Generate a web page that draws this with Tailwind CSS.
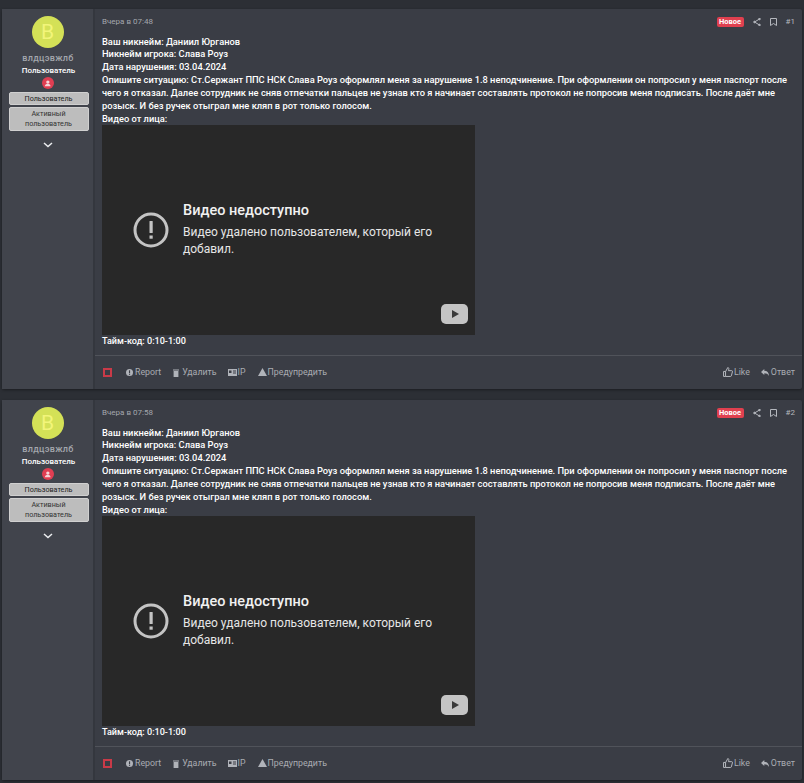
<!DOCTYPE html>
<html lang="ru">
<head>
<meta charset="UTF-8">
<title>Жалоба</title>
<script src="https://cdn.jsdelivr.net/npm/@tailwindcss/browser@4"></script>
</head>
<body class="bg-[#2c2f35] font-['Roboto',sans-serif] overflow-hidden">
<div class="h-[783px] pt-[9px] pl-[2px] pr-[2px] flex flex-col gap-[11px]">

  <!-- Post 1 -->
  <article class="h-[380px] flex bg-[#3a3d45] rounded-[2px] shadow-[0_1px_3px_rgba(0,0,0,0.4)]">
    <div class="w-[93px] shrink-0 bg-[#41444c] border-r-2 border-[#34373e] flex flex-col items-center pt-[7px]">
      <div class="w-8 h-8 rounded-full bg-[#d4e157] text-[#f2f57a] text-[21px] leading-8 text-center">B</div>
      <div class="mt-[4px] ml-px text-[9px] leading-3 font-medium tracking-[0.3px] text-[#a4a7ad]">влдцэвжлб</div>
      <div class="mt-[1px] ml-[2px] text-[8px] leading-3 font-medium text-white">Пользователь</div>
      <div class="mt-0 w-3 h-3 rounded-full bg-[#e03e52] flex items-center justify-center">
        <svg width="7" height="7" viewBox="0 0 10 10" fill="#f6d5d9"><circle cx="5.500" cy="3" r="2.400"/><path d="M1 9c.5-2.500 2.500-3.600 4.500-3.600S9 6.500 9.500 9z"/></svg>
      </div>
      <div class="mt-[3px] ml-[2px] w-20 h-[13px] rounded-[2px] bg-[#bdbdbd] border border-[#d0d0d0] text-[7.2px] leading-[11px] text-center text-[#222]">Пользователь</div>
      <div class="mt-[2px] ml-[2px] w-20 h-6 rounded-[2px] bg-[#bdbdbd] border border-[#d0d0d0] text-[7.2px] leading-[10px] pt-px text-center text-[#333]">Активный<br>пользователь</div>
      <svg class="mt-[11px]" width="10" height="6" viewBox="0 0 10 6" fill="none" stroke="#eceef0" stroke-width="1.500"><path d="M1 1l4 3.500L9 1"/></svg>
    </div>
    <div class="flex-1 flex flex-col min-w-0">
      <header class="h-[26px] flex items-center pl-[7px] pr-[7px] pt-[1px] text-[8px] text-[#a4a7ad]">
        <span>Вчера в 07:48</span>
        <span class="ml-auto w-[27px] h-[10px] rounded-[2px] bg-[#e0404f] text-white font-bold text-[7.5px] leading-[10px] text-center">Новое</span>
        <svg class="ml-[9px]" width="8" height="8" viewBox="0 0 8 8" fill="none" stroke="#b5b8be" stroke-width="1"><path d="M6.500 1L1.500 4l5 3"/><circle cx="6.500" cy="1" r=".8" fill="#b5b8be"/><circle cx="1.500" cy="4" r=".8" fill="#b5b8be"/><circle cx="6.500" cy="7" r=".8" fill="#b5b8be"/></svg>
        <svg class="ml-[9px]" width="7" height="8" viewBox="0 0 7 8" fill="none" stroke="#b5b8be" stroke-width="1"><path d="M.5.500h6v7L3.500 5.500l-3 2z"/></svg>
        <span class="ml-[9px] text-[#b5b8be]">#1</span>
      </header>
      <div class="pl-[7px] text-[9.3px] leading-[13px] font-medium text-white">
        <p class="pt-px -mb-px">Ваш никнейм: Даниил Юрганов</p>
        <p>Никнейм игрока: Слава Роуз</p>
        <p>Дата нарушения: 03.04.2024</p>
        <p class="pr-[8px]">Опишите ситуацию: Ст.Сержант ППС НСК Слава Роуз оформлял меня за нарушение 1.8 неподчинение. При оформлении он попросил у меня паспорт после чего я отказал. Далее сотрудник не сняв отпечатки пальцев не узнав кто я начинает составлять протокол не попросив меня подписать. После даёт мне розыск. И без ручек отыграл мне кляп в рот только голосом.</p>
        <p>Видео от лица:</p>
        <div class="relative w-[373px] h-[210px] bg-[#282828] flex items-start pl-[31px] pt-[77px] font-normal">
          <svg class="shrink-0 mt-[10px]" width="36" height="36" viewBox="0 0 36 36" fill="none"><circle cx="18" cy="18" r="16" stroke="#c4c4c4" stroke-width="3"/><rect x="16.500" y="9" width="3.200" height="12" rx=".5" fill="#c4c4c4"/><rect x="16.500" y="23.500" width="3.200" height="3.200" fill="#c4c4c4"/></svg>
          <div class="ml-[14px] w-[265px]">
            <div class="text-[14.5px] leading-[18px] font-medium text-[#f1f1f1]">Видео недоступно</div>
            <div class="mt-[4px] text-[12px] leading-[17px] text-[#e6e6e6]">Видео удалено пользователем, который его добавил.</div>
          </div>
          <div class="absolute right-[7px] bottom-[11px] w-[27px] h-5 rounded-[5px] bg-[#c4c4c4] flex items-center justify-center">
            <svg width="8" height="8" viewBox="0 0 8 8" fill="#3a3a3a"><path d="M1 0l7 4-7 4z"/></svg>
          </div>
        </div>
        <p class="text-[9.1px]">Тайм-код: 0:10-1:00</p>
      </div>
      <footer class="mt-[7px] h-[35px] border-t border-[#50535a] flex items-center pl-[8px] pr-[7px] text-[8.8px] text-[#a9acb2]">
        <span class="w-[9px] h-[9px] border-2 border-[#c93a48]"></span>
        <svg class="ml-[14px]" width="7" height="7" viewBox="0 0 8 8"><circle cx="4" cy="4" r="4" fill="#b0b3b9"/><rect x="3.400" y="1.500" width="1.300" height="3.200" fill="#3a3d45"/><rect x="3.400" y="5.400" width="1.300" height="1.300" fill="#3a3d45"/></svg>
        <span class="ml-[2px]">Report</span>
        <svg class="ml-[12px]" width="6" height="8" viewBox="0 0 6 8" fill="#b0b3b9"><rect y=".5" width="6" height="1"/><rect x=".6" y="2" width="4.800" height="6"/></svg>
        <span class="ml-[3px]">Удалить</span>
        <svg class="ml-[11px]" width="9" height="7" viewBox="0 0 9 7"><rect width="9" height="7" fill="#b0b3b9"/><rect x="1" y="1.500" width="2.500" height="2.500" fill="#3a3d45"/><rect x="5" y="1.500" width="3" height="1" fill="#3a3d45"/><rect x="5" y="3.500" width="3" height="1" fill="#3a3d45"/></svg>
        <span class="ml-px">IP</span>
        <svg class="ml-[12px] mb-px" width="9" height="8" viewBox="0 0 9 8"><path d="M4.500 0L9 8H0z" fill="#b0b3b9"/></svg>
        <span class="ml-px">Предупредить</span>
        <svg class="ml-auto mb-px" width="10" height="10" viewBox="0 0 9 9" fill="none" stroke="#b5b8be" stroke-width=".9"><path d="M.5 4h1.800v4.500H.5zM2.300 4.200L4.300.5c.8 0 1.100.7.900 1.500l-.3 1.300h3c.6 0 .8.500.6 1l-1 3.700c-.1.300-.3.500-.7.500H2.300"/></svg>
        <span class="ml-px">Like</span>
        <svg class="ml-[11px]" width="8" height="7" viewBox="0 0 8 7" fill="#b0b3b9"><path d="M0 3l3.300-3v1.800C6 1.800 8 3.500 8 7 7 5 5.500 4.300 3.300 4.300V6z"/></svg>
        <span class="ml-[2px]">Ответ</span>
      </footer>
    </div>
  </article>

  <!-- Post 2 -->
  <article class="h-[380px] flex bg-[#3a3d45] rounded-[2px] shadow-[0_1px_3px_rgba(0,0,0,0.4)]">
    <div class="w-[93px] shrink-0 bg-[#41444c] border-r-2 border-[#34373e] flex flex-col items-center pt-[7px]">
      <div class="w-8 h-8 rounded-full bg-[#d4e157] text-[#f2f57a] text-[21px] leading-8 text-center">B</div>
      <div class="mt-[4px] ml-px text-[9px] leading-3 font-medium tracking-[0.3px] text-[#a4a7ad]">влдцэвжлб</div>
      <div class="mt-[1px] ml-[2px] text-[8px] leading-3 font-medium text-white">Пользователь</div>
      <div class="mt-0 w-3 h-3 rounded-full bg-[#e03e52] flex items-center justify-center">
        <svg width="7" height="7" viewBox="0 0 10 10" fill="#f6d5d9"><circle cx="5.500" cy="3" r="2.400"/><path d="M1 9c.5-2.500 2.500-3.600 4.500-3.600S9 6.500 9.500 9z"/></svg>
      </div>
      <div class="mt-[3px] ml-[2px] w-20 h-[13px] rounded-[2px] bg-[#bdbdbd] border border-[#d0d0d0] text-[7.2px] leading-[11px] text-center text-[#222]">Пользователь</div>
      <div class="mt-[2px] ml-[2px] w-20 h-6 rounded-[2px] bg-[#bdbdbd] border border-[#d0d0d0] text-[7.2px] leading-[10px] pt-px text-center text-[#333]">Активный<br>пользователь</div>
      <svg class="mt-[11px]" width="10" height="6" viewBox="0 0 10 6" fill="none" stroke="#eceef0" stroke-width="1.500"><path d="M1 1l4 3.500L9 1"/></svg>
    </div>
    <div class="flex-1 flex flex-col min-w-0">
      <header class="h-[26px] flex items-center pl-[7px] pr-[7px] pt-[1px] text-[8px] text-[#a4a7ad]">
        <span>Вчера в 07:58</span>
        <span class="ml-auto w-[27px] h-[10px] rounded-[2px] bg-[#e0404f] text-white font-bold text-[7.5px] leading-[10px] text-center">Новое</span>
        <svg class="ml-[9px]" width="8" height="8" viewBox="0 0 8 8" fill="none" stroke="#b5b8be" stroke-width="1"><path d="M6.500 1L1.500 4l5 3"/><circle cx="6.500" cy="1" r=".8" fill="#b5b8be"/><circle cx="1.500" cy="4" r=".8" fill="#b5b8be"/><circle cx="6.500" cy="7" r=".8" fill="#b5b8be"/></svg>
        <svg class="ml-[9px]" width="7" height="8" viewBox="0 0 7 8" fill="none" stroke="#b5b8be" stroke-width="1"><path d="M.5.500h6v7L3.500 5.500l-3 2z"/></svg>
        <span class="ml-[9px] text-[#b5b8be]">#2</span>
      </header>
      <div class="pl-[7px] text-[9.3px] leading-[13px] font-medium text-white">
        <p class="pt-px -mb-px">Ваш никнейм: Даниил Юрганов</p>
        <p>Никнейм игрока: Слава Роуз</p>
        <p>Дата нарушения: 03.04.2024</p>
        <p class="pr-[8px]">Опишите ситуацию: Ст.Сержант ППС НСК Слава Роуз оформлял меня за нарушение 1.8 неподчинение. При оформлении он попросил у меня паспорт после чего я отказал. Далее сотрудник не сняв отпечатки пальцев не узнав кто я начинает составлять протокол не попросив меня подписать. После даёт мне розыск. И без ручек отыграл мне кляп в рот только голосом.</p>
        <p>Видео от лица:</p>
        <div class="relative w-[373px] h-[210px] bg-[#282828] flex items-start pl-[31px] pt-[77px] font-normal">
          <svg class="shrink-0 mt-[10px]" width="36" height="36" viewBox="0 0 36 36" fill="none"><circle cx="18" cy="18" r="16" stroke="#c4c4c4" stroke-width="3"/><rect x="16.500" y="9" width="3.200" height="12" rx=".5" fill="#c4c4c4"/><rect x="16.500" y="23.500" width="3.200" height="3.200" fill="#c4c4c4"/></svg>
          <div class="ml-[14px] w-[265px]">
            <div class="text-[14.5px] leading-[18px] font-medium text-[#f1f1f1]">Видео недоступно</div>
            <div class="mt-[4px] text-[12px] leading-[17px] text-[#e6e6e6]">Видео удалено пользователем, который его добавил.</div>
          </div>
          <div class="absolute right-[7px] bottom-[11px] w-[27px] h-5 rounded-[5px] bg-[#c4c4c4] flex items-center justify-center">
            <svg width="8" height="8" viewBox="0 0 8 8" fill="#3a3a3a"><path d="M1 0l7 4-7 4z"/></svg>
          </div>
        </div>
        <p class="text-[9.1px]">Тайм-код: 0:10-1:00</p>
      </div>
      <footer class="mt-[7px] h-[35px] border-t border-[#50535a] flex items-center pl-[8px] pr-[7px] text-[8.8px] text-[#a9acb2]">
        <span class="w-[9px] h-[9px] border-2 border-[#c93a48]"></span>
        <svg class="ml-[14px]" width="7" height="7" viewBox="0 0 8 8"><circle cx="4" cy="4" r="4" fill="#b0b3b9"/><rect x="3.400" y="1.500" width="1.300" height="3.200" fill="#3a3d45"/><rect x="3.400" y="5.400" width="1.300" height="1.300" fill="#3a3d45"/></svg>
        <span class="ml-[2px]">Report</span>
        <svg class="ml-[12px]" width="6" height="8" viewBox="0 0 6 8" fill="#b0b3b9"><rect y=".5" width="6" height="1"/><rect x=".6" y="2" width="4.800" height="6"/></svg>
        <span class="ml-[3px]">Удалить</span>
        <svg class="ml-[11px]" width="9" height="7" viewBox="0 0 9 7"><rect width="9" height="7" fill="#b0b3b9"/><rect x="1" y="1.500" width="2.500" height="2.500" fill="#3a3d45"/><rect x="5" y="1.500" width="3" height="1" fill="#3a3d45"/><rect x="5" y="3.500" width="3" height="1" fill="#3a3d45"/></svg>
        <span class="ml-px">IP</span>
        <svg class="ml-[12px] mb-px" width="9" height="8" viewBox="0 0 9 8"><path d="M4.500 0L9 8H0z" fill="#b0b3b9"/></svg>
        <span class="ml-px">Предупредить</span>
        <svg class="ml-auto mb-px" width="10" height="10" viewBox="0 0 9 9" fill="none" stroke="#b5b8be" stroke-width=".9"><path d="M.5 4h1.800v4.500H.5zM2.300 4.200L4.300.5c.8 0 1.100.7.900 1.500l-.3 1.300h3c.6 0 .8.500.6 1l-1 3.700c-.1.300-.3.500-.7.500H2.300"/></svg>
        <span class="ml-px">Like</span>
        <svg class="ml-[11px]" width="8" height="7" viewBox="0 0 8 7" fill="#b0b3b9"><path d="M0 3l3.300-3v1.800C6 1.800 8 3.500 8 7 7 5 5.500 4.300 3.300 4.300V6z"/></svg>
        <span class="ml-[2px]">Ответ</span>
      </footer>
    </div>
  </article>
</div>
</body>
</html>
